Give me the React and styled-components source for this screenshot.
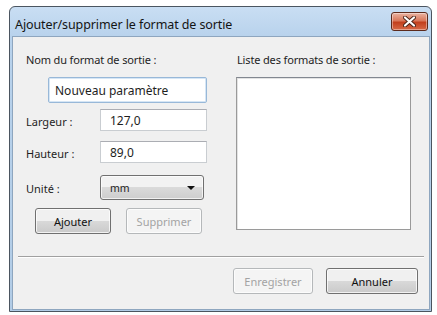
import styled, { createGlobalStyle } from 'styled-components';

const GlobalStyle = createGlobalStyle`
    html, body {
        margin: 0;
        padding: 0;
        background: #ffffff;
    }
    body {
        font-family: "Noto Sans", "Open Sans", sans-serif;
        font-size: 11px;
        color: #1e1e1e;
    }
`;

function App() {
    return (
        <>
            <GlobalStyle />
            <Page>
                <Window>
                    <TitleBar>
                        <Title>Ajouter/supprimer le format de sortie</Title>
                        <CloseButton aria-label="Fermer">
                            <svg width="13" height="11" viewBox="0 0 13 11">
                                <path d="M2 1.5 L11 9.5 M11 1.5 L2 9.5" stroke="#4a2418" strokeWidth="4" strokeLinecap="round" />
                                <path d="M2 1.5 L11 9.5 M11 1.5 L2 9.5" stroke="#ffffff" strokeWidth="2.2" strokeLinecap="round" />
                            </svg>
                        </CloseButton>
                    </TitleBar>
                    <Client>
                        <Body>
                            <Column>
                                <Label>Nom du format de sortie :</Label>
                                <NameInput defaultValue="Nouveau paramètre" />
                                <Row $top={6}>
                                    <RowLabel>Largeur :</RowLabel>
                                    <Field defaultValue="127,0" />
                                </Row>
                                <Row $top={10}>
                                    <RowLabel>Hauteur :</RowLabel>
                                    <Field defaultValue="89,0" />
                                </Row>
                                <Row $top={12}>
                                    <RowLabel>Unité :</RowLabel>
                                    <Select>
                                        <span>mm</span>
                                        <Arrow />
                                    </Select>
                                </Row>
                                <ButtonRow>
                                    <Button $width={76}>Ajouter</Button>
                                    <Button $width={76} disabled>Supprimer</Button>
                                </ButtonRow>
                            </Column>
                            <Column>
                                <Label>Liste des formats de sortie :</Label>
                                <ListBox />
                            </Column>
                        </Body>
                        <Separator />
                        <Footer>
                            <Button $width={80} disabled>Enregistrer</Button>
                            <Button $width={92}>Annuler</Button>
                        </Footer>
                    </Client>
                </Window>
            </Page>
        </>
    );
}

export default App;

const Page = styled.div`
    padding: 6px 0 0 9px;
`;

const Window = styled.div`
    width: 421px;
    height: 304px;
    border: 1px solid #4b5560;
    border-radius: 6px 6px 0 0;
    background: linear-gradient(#c9def3, #b8d2ec 30px, #b2cce6);
    display: flex;
    flex-direction: column;
    box-shadow: 0 1px 0 #2b6f70;
`;

const TitleBar = styled.div`
    height: 29px;
    display: flex;
    align-items: flex-start;
    justify-content: space-between;
    padding: 0 3px 0 5px;
`;

const Title = styled.div`
    font-size: 12.5px;
    line-height: 14px;
    padding-top: 11px;
    color: #141414;
    letter-spacing: -0.1px;
`;

const CloseButton = styled.button`
    margin-top: 5px;
    width: 37px;
    height: 19px;
    padding: 0;
    border: 1px solid #5c2a1c;
    border-radius: 3px;
    background: linear-gradient(#eab4a3, #d9785b 45%, #c2401e 55%, #d76a48);
    display: flex;
    align-items: center;
    justify-content: center;
    box-shadow: inset 0 0 0 1px rgba(255, 255, 255, 0.4);
`;

const Client = styled.div`
    flex: 1;
    margin: 0 1px 1px 2px;
    background: #f0f0f0;
    border: 1px solid #8ea6bf;
    display: flex;
    flex-direction: column;
`;

const Body = styled.div`
    display: flex;
    gap: 30px;
    padding: 16px 0 0 13px;
`;

const Column = styled.div`
    display: flex;
    flex-direction: column;
`;

const Label = styled.div`
    line-height: 14px;
    white-space: nowrap;
    letter-spacing: -0.15px;
`;

const inputBase = `
    box-sizing: border-box;
    font-family: "Noto Sans", "Open Sans", sans-serif;
    font-size: 12px;
    color: #1e1e1e;
    background: #ffffff;
    outline: none;
    margin: 0;
`;

const NameInput = styled.input`
    ${inputBase}
    margin-top: 10px;
    margin-left: 22px;
    width: 159px;
    height: 26px;
    padding: 0 6px;
    border: 1px solid #98b8d8;
    border-radius: 2px;
    box-shadow: inset 0 0 0 1px #d6e6f5;
`;

const Row = styled.div`
    display: flex;
    align-items: center;
    margin-top: ${(p) => p.$top}px;
`;

const RowLabel = styled.div`
    width: 74px;
    line-height: 14px;
    padding-top: 3px;
`;

const Field = styled.input`
    ${inputBase}
    width: 107px;
    height: 22px;
    padding: 0 9px;
    border: 1px solid #c9cdd1;
    border-top-color: #abadb3;
`;

const Select = styled.div`
    box-sizing: border-box;
    width: 104px;
    height: 25px;
    border: 1px solid #707070;
    border-radius: 3px;
    background: linear-gradient(#f2f2f2 50%, #dadada 50%, #cdcdcd);
    display: flex;
    align-items: center;
    justify-content: space-between;
    padding: 0 8px 0 9px;
    font-size: 10.5px;
    box-shadow: inset 0 0 0 1px rgba(255, 255, 255, 0.7);
`;

const Arrow = styled.span`
    width: 0;
    height: 0;
    border-left: 4px solid transparent;
    border-right: 4px solid transparent;
    border-top: 4px solid #111111;
`;

const ButtonRow = styled.div`
    display: flex;
    gap: 15px;
    margin: 8px 0 0 9px;
`;

const Button = styled.button`
    box-sizing: border-box;
    width: ${(p) => p.$width}px;
    height: 26px;
    padding: 0;
    font-family: "Noto Sans", "Open Sans", sans-serif;
    font-size: 11px;
    color: #111111;
    border: 1px solid #707070;
    border-radius: 3px;
    background: linear-gradient(#f0f0f0 50%, #d9d9d9 50%, #cacaca);
    box-shadow: inset 0 0 0 1px rgba(255, 255, 255, 0.75);

    &:disabled {
        color: #a3a3a3;
        border-color: #b5b8ba;
        background: #f4f4f4;
    }
`;

const ListBox = styled.div`
    box-sizing: border-box;
    margin-top: 10px;
    margin-left: -1px;
    width: 175px;
    height: 153px;
    background: #ffffff;
    border: 1px solid #9a9a9a;
    border-top-color: #828790;
    box-shadow: inset 1px 1px 0 #e3e3e3;
`;

const Separator = styled.div`
    margin: 22px 5px 0 5px;
    border-top: 1px solid #a0a0a0;
    border-bottom: 1px solid #ffffff;
`;

const Footer = styled.div`
    display: flex;
    justify-content: flex-end;
    gap: 13px;
    padding: 10px 11px 0 0;
`;
